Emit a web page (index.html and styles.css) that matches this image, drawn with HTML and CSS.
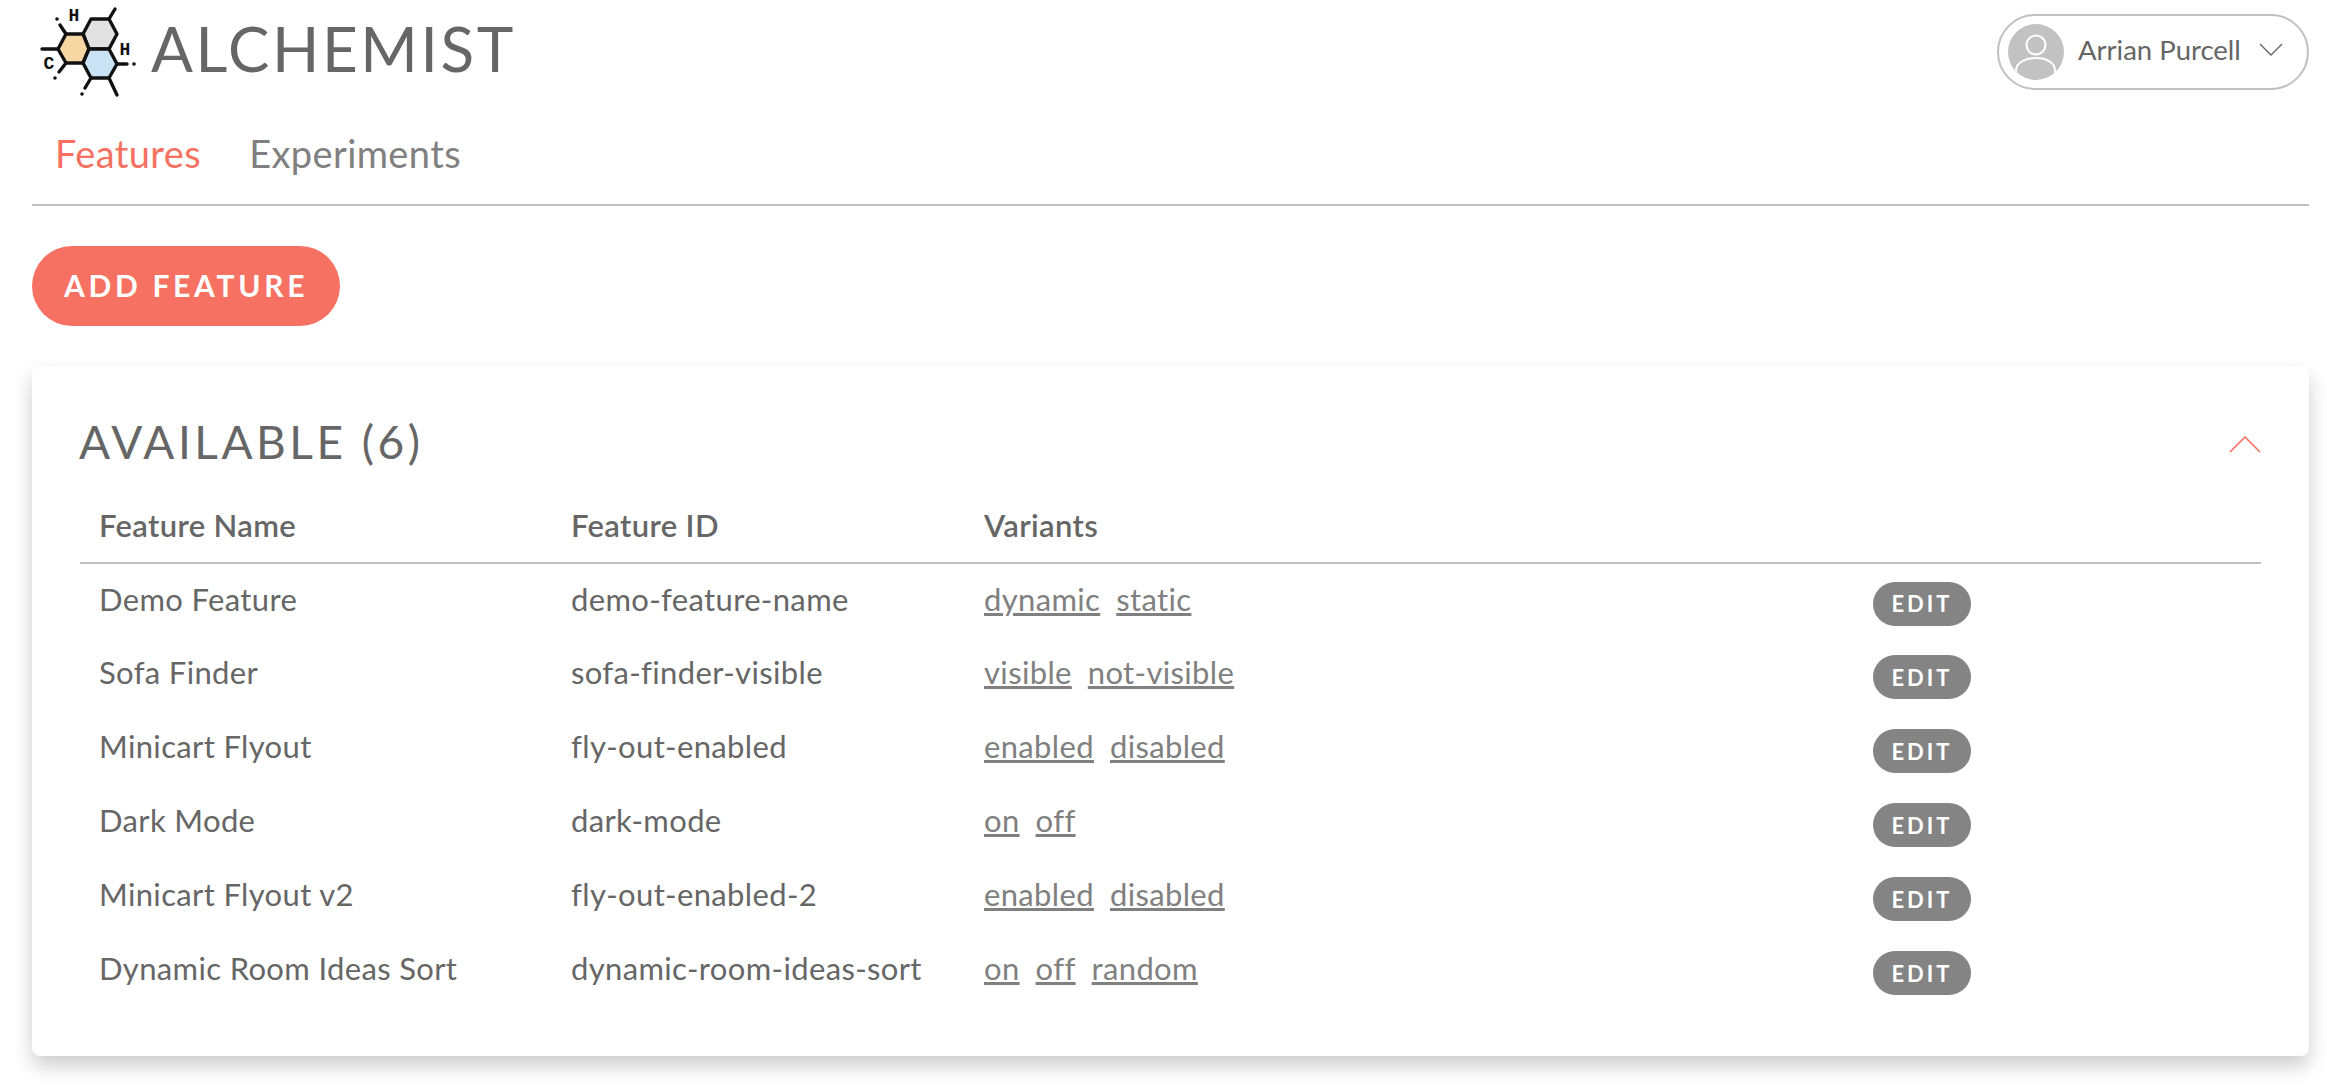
FILE: index.html
```html
<!DOCTYPE html>
<html lang="en">
    <head>
        <meta charset="UTF-8" />
        <title>Alchemist</title>
        <link rel="stylesheet" href="styles.css">
    </head>
    <body>
        <div class="page">
            <header class="topbar">
                <div class="brand">
                    <svg class="logo" viewBox="0 0 120 105" width="120" height="105">
                        <g stroke="#111" stroke-width="3.4" stroke-linejoin="round" stroke-linecap="round">
                            <path d="M63 34L71 19H89L97 34L89 49H69Z" fill="#e1e1e1"/>
                            <path d="M38 49L46 34H63L69 49L63 63H46Z" fill="#f6d7a4"/>
                            <path d="M69 49H89L97 64L89 78H71L63 63Z" fill="#c9e3f5"/>
                            <path d="M40 25L46 34M22 49H38M39 72L46 63M89 19L95 9M97 64H107M71 78L65 88M89 78L97 95" fill="none"/>
                        </g>
                        <g fill="#111">
                            <circle cx="37" cy="19" r="1.8"/>
                            <circle cx="35" cy="78" r="1.8"/>
                            <circle cx="114" cy="64" r="1.8"/>
                            <circle cx="62" cy="94" r="1.8"/>
                            <text class="atom" x="54" y="21">H</text>
                            <text class="atom" x="105" y="55">H</text>
                            <text class="atom" x="29" y="69">C</text>
                        </g>
                    </svg>
                    <h1 class="brand-name">ALCHEMIST</h1>
                </div>
                <div class="user">
                    <span class="avatar">
                        <svg viewBox="0 0 56 56" width="56" height="56">
                            <circle cx="28" cy="21" r="9.5" fill="none" stroke="#fff" stroke-width="2"/>
                            <path d="M8 53V47C8 38 18 34 28 34S47 38 47 47V53" fill="none" stroke="#fff" stroke-width="2"/>
                        </svg>
                    </span>
                    <span class="user-name">Arrian Purcell</span>
                    <svg class="user-caret" viewBox="0 0 24 13" width="24" height="13">
                        <path d="M1 1L12 12L23 1" fill="none" stroke="#666" stroke-width="1.4"/>
                    </svg>
                </div>
            </header>

            <nav class="tabs">
                <a class="tab tab-active">Features</a>
                <a class="tab">Experiments</a>
            </nav>

            <button class="add-btn">ADD FEATURE</button>

            <section class="card">
                <div class="card-head">
                    <h2 class="card-title">AVAILABLE (6)</h2>
                    <svg class="card-caret" viewBox="0 0 32 17" width="32" height="17">
                        <path d="M1 16L16 1L31 16" fill="none" stroke="#f67161" stroke-width="1.6"/>
                    </svg>
                </div>
                <table class="features">
                    <thead>
                        <tr>
                            <th class="col-name">Feature Name</th>
                            <th class="col-id">Feature ID</th>
                            <th class="col-variants">Variants</th>
                            <th></th>
                        </tr>
                    </thead>
                    <tbody>
                        <tr>
                            <td>Demo Feature</td>
                            <td>demo-feature-name</td>
                            <td><a>dynamic</a><a>static</a></td>
                            <td><button class="edit-btn">EDIT</button></td>
                        </tr>
                        <tr>
                            <td>Sofa Finder</td>
                            <td>sofa-finder-visible</td>
                            <td><a>visible</a><a>not-visible</a></td>
                            <td><button class="edit-btn">EDIT</button></td>
                        </tr>
                        <tr>
                            <td>Minicart Flyout</td>
                            <td>fly-out-enabled</td>
                            <td><a>enabled</a><a>disabled</a></td>
                            <td><button class="edit-btn">EDIT</button></td>
                        </tr>
                        <tr>
                            <td>Dark Mode</td>
                            <td>dark-mode</td>
                            <td><a>on</a><a>off</a></td>
                            <td><button class="edit-btn">EDIT</button></td>
                        </tr>
                        <tr>
                            <td>Minicart Flyout v2</td>
                            <td>fly-out-enabled-2</td>
                            <td><a>enabled</a><a>disabled</a></td>
                            <td><button class="edit-btn">EDIT</button></td>
                        </tr>
                        <tr>
                            <td>Dynamic Room Ideas Sort</td>
                            <td>dynamic-room-ideas-sort</td>
                            <td><a>on</a><a>off</a><a>random</a></td>
                            <td><button class="edit-btn">EDIT</button></td>
                        </tr>
                    </tbody>
                </table>
            </section>
        </div>
    </body>
</html>
```

FILE: styles.css
```css
* {
    margin: 0;
    padding: 0;
    box-sizing: border-box;
}

body {
    background-color: #fff;
    color: #666;
    font-family: "Lato", "Open Sans", sans-serif;
}

.page {
    padding: 0 18px 35px 32px;
}

.topbar {
    height: 105px;
    display: flex;
    justify-content: space-between;
}

.brand {
    display: flex;
    margin-left: -12px;
}

.atom {
    font: bold 18px "Liberation Mono", monospace;
    text-anchor: middle;
}

.brand-name {
    font-size: 62px;
    font-weight: 400;
    letter-spacing: 2.6px;
    line-height: 96px;
    margin-left: 11px;
}

.user {
    width: 312px;
    height: 76px;
    margin-top: 14px;
    padding-left: 9px;
    border: 2px solid #c0c0c0;
    border-radius: 38px;
    display: flex;
    align-items: center;
}

.avatar {
    width: 56px;
    height: 56px;
    border-radius: 50%;
    background-color: #c2c2c2;
    overflow: hidden;
}

.user-name {
    font-size: 27.5px;
    margin-left: 14px;
    margin-bottom: 5px;
}

.user-caret {
    margin-left: 18px;
    margin-top: -6px;
}

.tabs {
    height: 101px;
    padding: 25px 0 0 23px;
    border-bottom: 2px solid #c0c0c0;
    display: flex;
    gap: 48px;
}

.tab {
    font-size: 38px;
    letter-spacing: 0.4px;
    line-height: 46px;
    color: #808080;
}

.tab-active {
    color: #f67161;
}

.add-btn {
    display: block;
    width: 308px;
    height: 80px;
    margin-top: 40px;
    padding-bottom: 2px;
    border: 0;
    border-radius: 40px;
    background-color: #f67161;
    color: #fff;
    font: bold 30px "Lato", sans-serif;
    letter-spacing: 3.7px;
}

.card {
    height: 690px;
    margin-top: 40px;
    padding: 0 48px;
    border-radius: 8px;
    background-color: #fff;
    box-shadow: 0 10px 20px rgba(0, 0, 0, 0.2);
}

.card-head {
    height: 140px;
    display: flex;
    justify-content: space-between;
    align-items: flex-start;
}

.card-title {
    font-size: 46px;
    font-weight: 400;
    letter-spacing: 3.5px;
    line-height: 56px;
    margin-top: 48px;
    margin-left: -1px;
}

.card-caret {
    margin-top: 70px;
}

.features {
    width: 100%;
    border-collapse: collapse;
    table-layout: fixed;
    font-size: 31px;
    letter-spacing: 0.35px;
}

.features th {
    height: 55px;
    padding: 0 0 18px 19px;
    border-bottom: 2px solid #c0c0c0;
    text-align: left;
    font-weight: 600;
}

.features td {
    height: 74px;
    padding: 0 0 4px 19px;
    white-space: nowrap;
}

.col-name {
    width: 472px;
}

.col-id {
    width: 413px;
}

.col-variants {
    width: 889px;
}

.features a {
    color: #808080;
    text-decoration: underline;
    margin-right: 16px;
}

.edit-btn {
    display: block;
    width: 98px;
    height: 44px;
    margin-top: 10px;
    border: 0;
    border-radius: 22px;
    background-color: #848484;
    color: #fff;
    font: bold 22px "Lato", sans-serif;
    letter-spacing: 3px;
}
```
